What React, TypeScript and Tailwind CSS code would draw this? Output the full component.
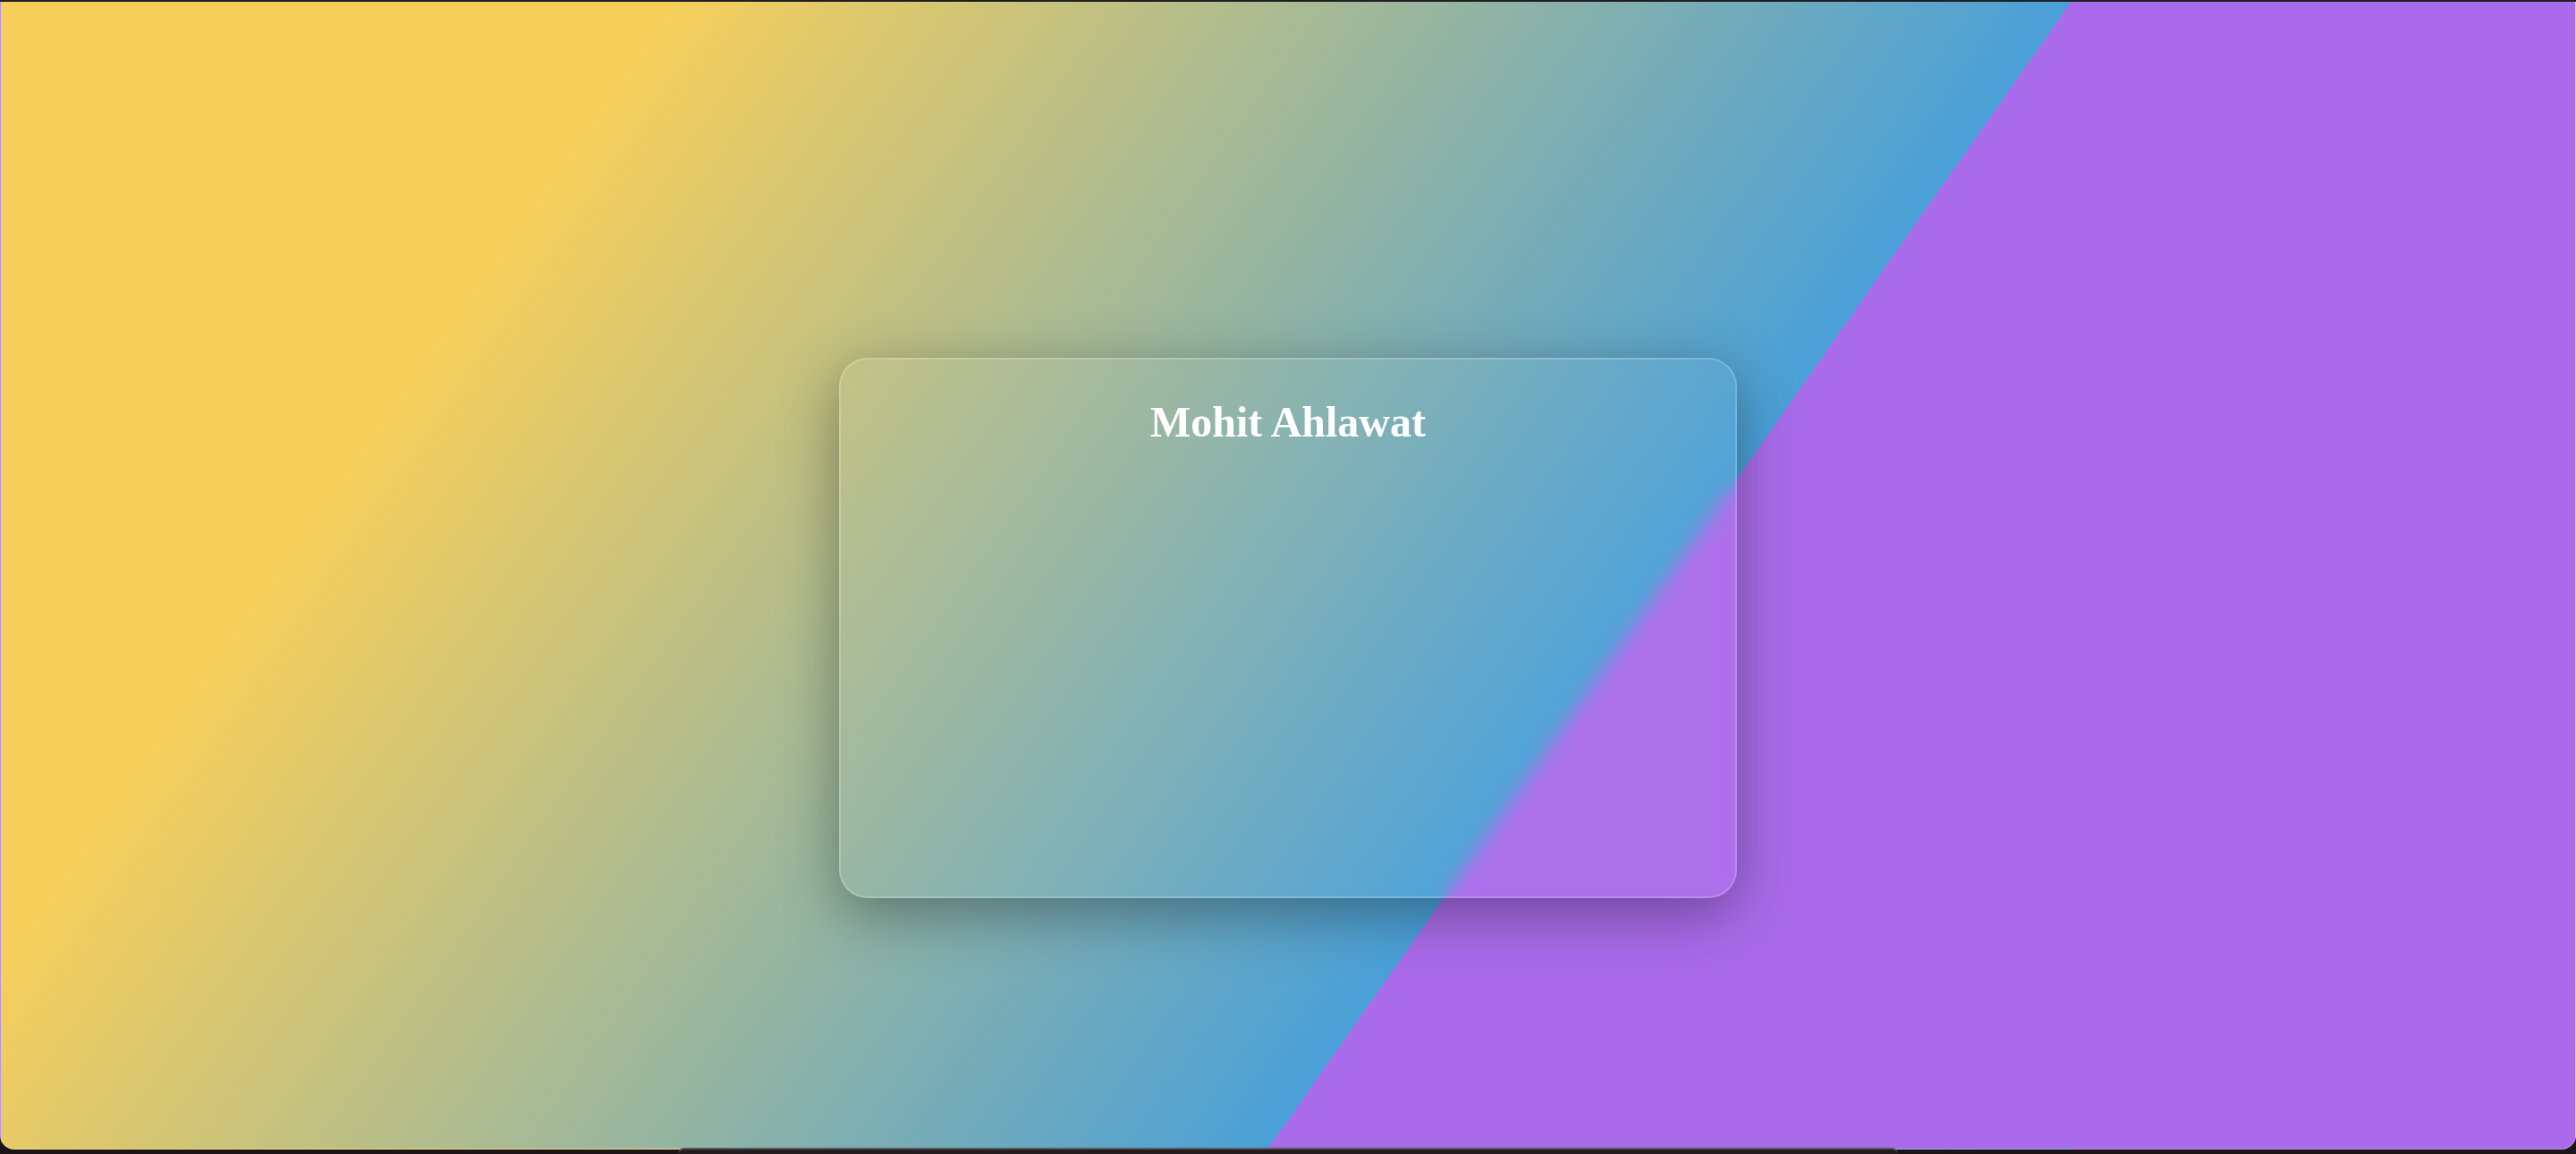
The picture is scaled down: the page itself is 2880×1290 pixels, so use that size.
export default function App() {
  return (
    <div className="flex h-[1290px] w-full flex-col bg-[#1c1517]">
      {/* thin top edge */}
      <div className="h-[2px] w-full bg-[#1f1f23]" />

      {/* window */}
      <div className="flex h-[1283px] w-full justify-center rounded-b-[16px] border-x border-b border-white/25 bg-[linear-gradient(125deg,#f6cf5b_20%,#4aa0d8_61.3%,#a96be9_61.3%)] pt-[398px]">
        <div className="h-[604px] w-[1004px] rounded-[32px] border-2 border-white/20 bg-white/[0.04] pt-[43px] text-center shadow-[0_18px_64px_rgba(0,0,0,0.35)] backdrop-blur-[10px]">
          <h1 className="font-['Liberation_Serif','Times_New_Roman',serif] text-[48px] font-bold leading-[53px] text-white">
            Mohit Ahlawat
          </h1>
        </div>
      </div>

      {/* dock peeking out below */}
      <div className="flex flex-1 justify-center">
        <div className="-mt-[2px] h-[7px] w-[1364px] rounded-t-[18px] border-t-2 border-[#5a5656] bg-[#241d1f]" />
      </div>
    </div>
  );
}
